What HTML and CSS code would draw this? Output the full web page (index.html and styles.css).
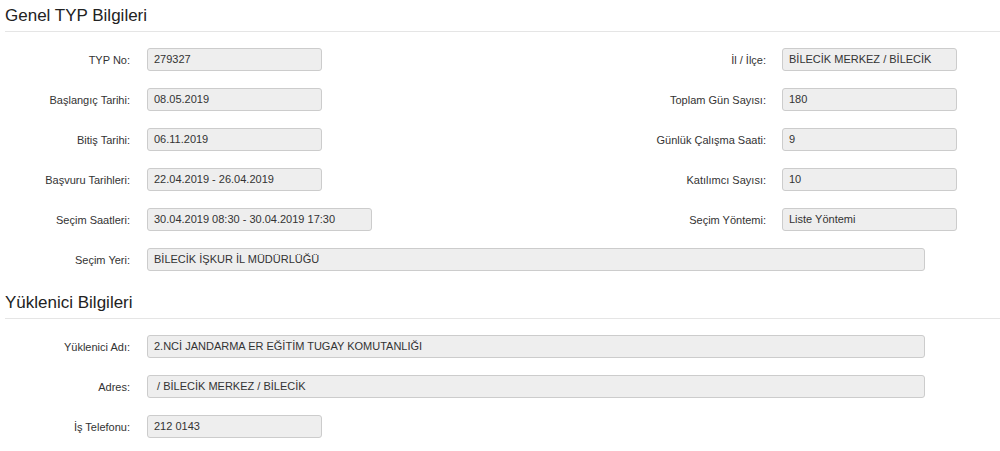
FILE: index.html
```html
<!DOCTYPE html>
<html lang="tr">
<head>
<meta charset="utf-8">
<link rel="stylesheet" href="styles.css">
</head>
<body>
<div class="page">
  <h2 class="section-title">Genel TYP Bilgileri</h2>
  <div class="rows">
    <div class="row">
      <div class="field"><label class="lbl">TYP No:</label><div class="inp">279327</div></div>
      <div class="field right"><label class="lbl">İl / İlçe:</label><div class="inp">BİLECİK MERKEZ / BİLECİK</div></div>
    </div>
    <div class="row">
      <div class="field"><label class="lbl">Başlangıç Tarihi:</label><div class="inp">08.05.2019</div></div>
      <div class="field right"><label class="lbl">Toplam Gün Sayısı:</label><div class="inp">180</div></div>
    </div>
    <div class="row">
      <div class="field"><label class="lbl">Bitiş Tarihi:</label><div class="inp">06.11.2019</div></div>
      <div class="field right"><label class="lbl">Günlük Çalışma Saati:</label><div class="inp">9</div></div>
    </div>
    <div class="row">
      <div class="field"><label class="lbl">Başvuru Tarihleri:</label><div class="inp">22.04.2019 - 26.04.2019</div></div>
      <div class="field right"><label class="lbl">Katılımcı Sayısı:</label><div class="inp">10</div></div>
    </div>
    <div class="row">
      <div class="field"><label class="lbl">Seçim Saatleri:</label><div class="inp mid">30.04.2019 08:30 - 30.04.2019 17:30</div></div>
      <div class="field right"><label class="lbl">Seçim Yöntemi:</label><div class="inp">Liste Yöntemi</div></div>
    </div>
    <div class="row">
      <div class="field"><label class="lbl">Seçim Yeri:</label><div class="inp wide">BİLECİK İŞKUR İL MÜDÜRLÜĞÜ</div></div>
    </div>
  </div>

  <h2 class="section-title">Yüklenici Bilgileri</h2>
  <div class="rows">
    <div class="row">
      <div class="field"><label class="lbl">Yüklenici Adı:</label><div class="inp wide">2.NCİ JANDARMA ER EĞİTİM TUGAY KOMUTANLIĞI</div></div>
    </div>
    <div class="row">
      <div class="field"><label class="lbl">Adres:</label><div class="inp wide">&nbsp;/ BİLECİK MERKEZ / BİLECİK</div></div>
    </div>
    <div class="row">
      <div class="field"><label class="lbl">İş Telefonu:</label><div class="inp">212 0143</div></div>
    </div>
  </div>
</div>
</body>
</html>
```

FILE: styles.css
```css
* { box-sizing: border-box; }
html, body { margin: 0; padding: 0; background: #fff; }
body {
  font-family: "Liberation Sans", Arial, sans-serif;
  color: #333;
}
.page { padding-left: 5px; }
.section-title {
  margin: 0;
  height: 32px;
  padding-top: 6px;
  font-size: 17px;
  font-weight: normal;
  line-height: 20px;
  color: #222;
  border-bottom: 1px solid #e5e5e5;
}
.rows {
  padding-top: 16px;
  padding-bottom: 16px;
  display: flex;
  flex-direction: column;
  gap: 17px;
}
.row {
  display: flex;
  align-items: center;
  height: 23px;
  padding-right: 43px;
}
.field {
  display: flex;
  align-items: center;
}
.field.right { margin-left: auto; }
.lbl {
  width: 125px;
  text-align: right;
  font-size: 11px;
  color: #333;
  margin-right: 17px;
  white-space: nowrap;
}
.field.right .lbl { width: 180px; margin-right: 16px; }
.inp {
  width: 175px;
  height: 23px;
  line-height: 21px;
  padding: 0 6px;
  font-size: 11px;
  color: #333;
  background: #eee;
  border: 1px solid #ccc;
  border-radius: 3px;
  white-space: nowrap;
  overflow: hidden;
}
.inp.mid { width: 225px; }
.inp.wide { width: 778px; }
```
